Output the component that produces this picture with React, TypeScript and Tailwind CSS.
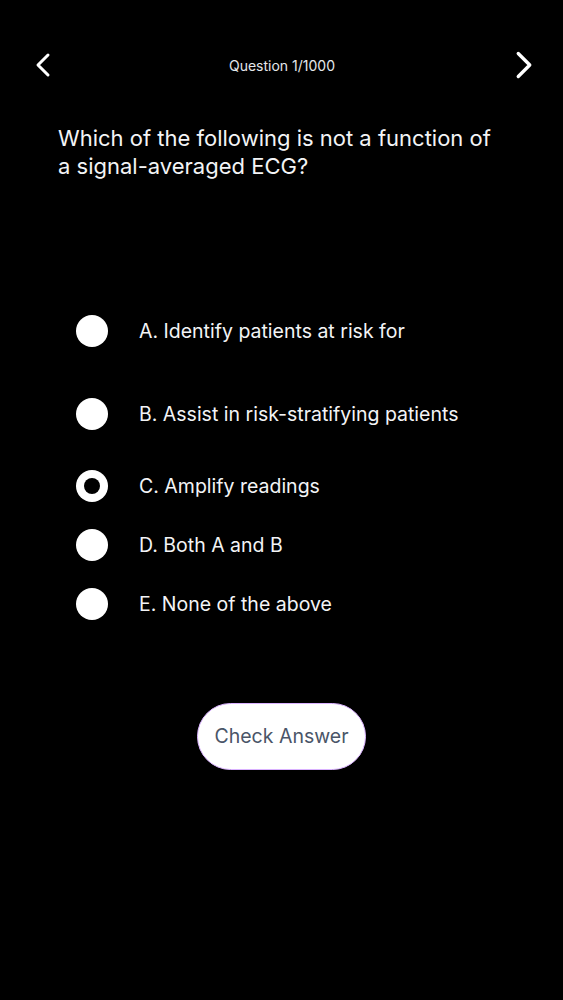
import { ChevronLeft, ChevronRight } from "lucide-react";

type Option = {
  label: string;
  selected?: boolean;
  gap: string;
};

const options: Option[] = [
  { label: "A. Identify patients at risk for", gap: "mt-[127px]" },
  { label: "B. Assist in risk-stratifying patients", gap: "mt-[35px]" },
  { label: "C. Amplify readings", selected: true, gap: "mt-[24px]" },
  { label: "D. Both A and B", gap: "mt-[11px]" },
  { label: "E. None of the above", gap: "mt-[11px]" },
];

export default function App() {
  return (
    <div
      className="min-h-[1000px] w-full bg-black pt-[48px] text-white"
      style={{ fontFamily: "Inter, 'Noto Sans', sans-serif" }}
    >
      {/* Header */}
      <div className="flex h-[34px] items-center justify-between pl-[23px] pr-[16px]">
        <ChevronLeft size={40} strokeWidth={1.8} className="text-white" />
        <span className="text-[14px] text-gray-200">Question 1/1000</span>
        <ChevronRight size={46} strokeWidth={1.75} className="text-white" />
      </div>

      {/* Question */}
      <p className="mt-[42px] w-[500px] pl-[58px] text-[22px] leading-[28px] text-gray-100">
        Which of the following is not a function of a signal-averaged ECG?
      </p>

      {/* Options */}
      <div className="flex flex-col px-[76px]">
        {options.map((o) => (
          <div key={o.label} className={`flex h-[48px] items-center ${o.gap}`}>
            <div className="flex h-[32px] w-[32px] shrink-0 items-center justify-center rounded-full bg-white">
              {o.selected && <div className="h-[16px] w-[16px] rounded-full bg-black" />}
            </div>
            <span className="ml-[31px] pt-[2px] text-[19.5px] text-gray-100">{o.label}</span>
          </div>
        ))}
      </div>

      {/* Button */}
      <div className="mt-[75px] flex justify-center">
        <button className="h-[67px] w-[169px] rounded-full border border-purple-300 bg-white text-[19.5px] text-[#4a5568]">
          Check Answer
        </button>
      </div>
    </div>
  );
}
